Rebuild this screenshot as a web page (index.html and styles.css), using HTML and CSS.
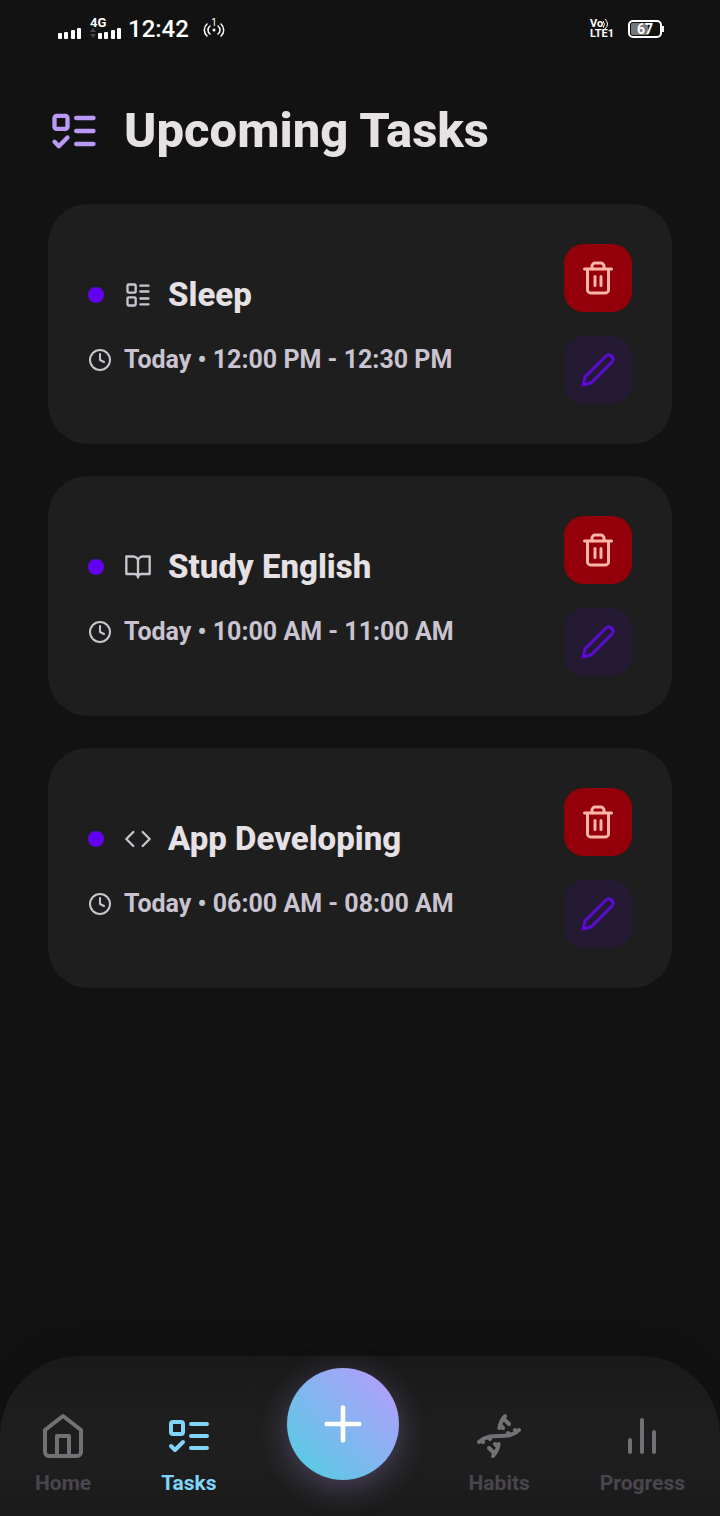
FILE: index.html
```html
<!DOCTYPE html>
<html lang="en">
<head>
    <meta charset="UTF-8">
    <meta name="viewport" content="width=device-width, initial-scale=1.0">
    <title>Upcoming Tasks</title>
    <link rel="stylesheet" href="styles.css">
</head>
<body>
    <!-- Icons shared by the cards -->
    <svg class="sprite" aria-hidden="true">
        <symbol id="icon-todo" viewBox="0 0 24 24">
            <rect x="3" y="5" width="6" height="6" rx="1"/>
            <path d="m3 17 2 2 4-4M13 6h8M13 12h8M13 18h8"/>
        </symbol>
        <symbol id="icon-clock" viewBox="0 0 24 24">
            <circle cx="12" cy="12" r="10"/>
            <path d="M12 6v6l4 2"/>
        </symbol>
        <symbol id="icon-trash" viewBox="0 0 24 24">
            <path d="M3 6h18M19 6v14c0 1-1 2-2 2H7c-1 0-2-1-2-2V6M8 6V4c0-1 1-2 2-2h4c1 0 2 1 2 2v2M10 11v6M14 11v6"/>
        </symbol>
        <symbol id="icon-pencil" viewBox="0 0 24 24">
            <path d="M17 3a2.850 2.830 0 1 1 4 4L7.500 20.500 2 22l1.500-5.500Z"/>
        </symbol>
    </svg>

    <header class="status-bar">
        <div class="status-left">
            <svg class="signal" width="24" height="11" viewBox="0 0 24 11" aria-hidden="true">
                <rect x="0" y="5" width="4" height="6" rx="1"/>
                <rect x="6" y="4" width="4" height="7" rx="1"/>
                <rect x="13" y="2" width="4" height="9" rx="1"/>
                <rect x="19" y="0" width="4" height="11" rx="1"/>
            </svg>
            <div class="network">
                <span class="network-type">4G</span>
                <svg class="signal" width="32" height="11" viewBox="0 0 32 11" aria-hidden="true">
                    <path class="dim" d="M0 4l3-4 3 4zM0 6l3 4 3-4z"/>
                    <rect x="8" y="5" width="4" height="6" rx="1"/>
                    <rect x="14" y="4" width="4" height="7" rx="1"/>
                    <rect x="21" y="2" width="4" height="9" rx="1"/>
                    <rect x="27" y="0" width="4" height="11" rx="1"/>
                </svg>
            </div>
            <span class="time">12:42</span>
            <svg class="hotspot" width="22" height="22" viewBox="0 0 22 22" aria-hidden="true">
                <circle cx="11" cy="12" r="1.500"/>
                <path d="M7 8a5 5 0 0 0 0 8M15 8a5 5 0 0 1 0 8M4 6a8 8 0 0 0 0 12M18 6a8 8 0 0 1 0 12"/>
                <text x="11" y="8">1</text>
            </svg>
        </div>
        <div class="status-right">
            <div class="volte">
                <span class="vo">Vo<svg width="7" height="10" viewBox="0 0 7 10" aria-hidden="true"><path d="M0 2q3 3 0 7M2 0q5 5 0 10"/></svg></span>
                <span>LTE1</span>
            </div>
            <div class="battery"><span>67</span></div>
        </div>
    </header>

    <main class="content">
        <h1 class="page-title">
            <svg class="icon title-icon"><use href="#icon-todo"/></svg>
            Upcoming Tasks
        </h1>

        <article class="task-card">
            <div class="task-info">
                <h2 class="task-name">
                    <span class="dot"></span>
                    <svg class="icon task-icon" viewBox="0 0 24 24">
                        <rect x="3" y="3" width="7" height="7" rx="1"/>
                        <rect x="3" y="14" width="7" height="7" rx="1"/>
                        <path d="M14 4h7M14 9h7M14 15h7M14 20h7"/>
                    </svg>
                    Sleep
                </h2>
                <p class="task-time">
                    <svg class="icon clock-icon"><use href="#icon-clock"/></svg>
                    Today • 12:00 PM - 12:30 PM
                </p>
            </div>
            <div class="task-actions">
                <button class="btn btn-delete" aria-label="Delete Sleep"><svg class="icon"><use href="#icon-trash"/></svg></button>
                <button class="btn btn-edit" aria-label="Edit Sleep"><svg class="icon"><use href="#icon-pencil"/></svg></button>
            </div>
        </article>

        <article class="task-card">
            <div class="task-info">
                <h2 class="task-name">
                    <span class="dot"></span>
                    <svg class="icon task-icon" viewBox="0 0 24 24">
                        <path d="M2 3h6a4 4 0 0 1 4 4v14a3 3 0 0 0-3-3H2zM22 3h-6a4 4 0 0 0-4 4v14a3 3 0 0 1 3-3h7z"/>
                    </svg>
                    Study English
                </h2>
                <p class="task-time">
                    <svg class="icon clock-icon"><use href="#icon-clock"/></svg>
                    Today • 10:00 AM - 11:00 AM
                </p>
            </div>
            <div class="task-actions">
                <button class="btn btn-delete" aria-label="Delete Study English"><svg class="icon"><use href="#icon-trash"/></svg></button>
                <button class="btn btn-edit" aria-label="Edit Study English"><svg class="icon"><use href="#icon-pencil"/></svg></button>
            </div>
        </article>

        <article class="task-card">
            <div class="task-info">
                <h2 class="task-name">
                    <span class="dot"></span>
                    <svg class="icon task-icon" viewBox="0 0 24 24">
                        <path d="m16 18 6-6-6-6M8 6l-6 6 6 6"/>
                    </svg>
                    App Developing
                </h2>
                <p class="task-time">
                    <svg class="icon clock-icon"><use href="#icon-clock"/></svg>
                    Today • 06:00 AM - 08:00 AM
                </p>
            </div>
            <div class="task-actions">
                <button class="btn btn-delete" aria-label="Delete App Developing"><svg class="icon"><use href="#icon-trash"/></svg></button>
                <button class="btn btn-edit" aria-label="Edit App Developing"><svg class="icon"><use href="#icon-pencil"/></svg></button>
            </div>
        </article>
    </main>

    <nav class="tab-bar">
        <a class="tab" href="#home">
            <svg class="icon" viewBox="0 0 24 24">
                <path d="m3 9 9-7 9 7v11a2 2 0 0 1-2 2H5a2 2 0 0 1-2-2zM9 22V12h6v10"/>
            </svg>
            Home
        </a>
        <a class="tab active" href="#tasks">
            <svg class="icon"><use href="#icon-todo"/></svg>
            Tasks
        </a>
        <button class="add-btn" aria-label="Add task">
            <svg class="icon" viewBox="0 0 24 24"><path d="M5 12h14M12 5v14"/></svg>
        </button>
        <a class="tab" href="#habits">
            <svg class="icon" viewBox="0 0 24 24">
                <path d="m10 16 1.500 1.500M14 8l-1.500-1.500M15 2c-1.798 1.998-2.518 3.995-2.807 5.993M16.500 10.500l1 1M17 6l-2.891-2.891M2 15c6.667-6 13.333 0 20-6M20 9l.891.891M3.109 14.109 4 15M6.500 12.500l1 1M7 18l2.891 2.891M9 22c1.798-1.998 2.518-3.995 2.807-5.993"/>
            </svg>
            Habits
        </a>
        <a class="tab" href="#progress">
            <svg class="icon" viewBox="0 0 24 24"><path d="M6 20v-6M12 20V4M18 20V10"/></svg>
            Progress
        </a>
    </nav>
</body>
</html>
```
FILE: styles.css
```css
* {
    box-sizing: border-box;
}
body {
    font-family: Roboto, sans-serif;
    margin: 0;
    min-height: 100vh;
    display: flex;
    flex-direction: column;
    background-color: #121212;
    color: #e6e1e5;
}
h1, h2, p {
    margin: 0;
}
button {
    border: none;
    padding: 0;
    cursor: pointer;
}
.sprite {
    display: none;
}
.icon {
    flex: none;
    fill: none;
    stroke: currentColor;
    stroke-width: 2;
    stroke-linecap: round;
    stroke-linejoin: round;
}

/* Status bar */
.status-bar {
    display: flex;
    justify-content: space-between;
    align-items: center;
    height: 58px;
    padding: 0 58px;
    color: #fff;
}
.status-left, .status-right {
    display: flex;
    align-items: center;
}
.signal {
    display: block;
    fill: #fff;
}
.status-left > .signal {
    margin-top: 8px;
}
.signal .dim {
    fill: #48484a;
}
.network {
    width: 32px;
    margin: 0 6px 2px 8px;
}
.network-type {
    display: block;
    font-size: 13px;
    font-weight: 700;
    line-height: 11px;
}
.time {
    font-size: 24px;
    font-weight: 500;
    line-height: 28px;
}
.hotspot {
    margin-left: 14px;
    overflow: visible;
    fill: none;
    stroke: #fff;
    stroke-width: 1.5;
    stroke-linecap: round;
}
.hotspot circle, .hotspot text {
    fill: #fff;
    stroke: none;
}
.hotspot text {
    font-size: 10px;
    text-anchor: middle;
}
.volte {
    font-size: 11px;
    font-weight: 700;
    line-height: 10px;
}
.volte span {
    display: block;
}
.vo svg {
    fill: none;
    stroke: #fff;
    vertical-align: top;
}
.battery {
    position: relative;
    width: 34px;
    height: 18px;
    margin-left: 14px;
    border: 2px solid #fff;
    border-radius: 5px;
    background: linear-gradient(90deg, #777 60%, transparent 60%) content-box;
    padding: 1px;
    font-size: 14px;
    font-weight: 700;
    line-height: 12px;
    text-align: center;
}
.battery::after {
    content: "";
    position: absolute;
    top: 4px;
    right: -4px;
    width: 2px;
    height: 6px;
    background-color: #fff;
}

/* Tasks */
.content {
    flex: 1;
    display: flex;
    flex-direction: column;
    gap: 32px;
    padding: 44px 48px 32px;
}
.page-title {
    display: flex;
    align-items: center;
    gap: 24px;
    margin-bottom: 12px;
    font-size: 49px;
    font-weight: 800;
    line-height: 58px;
}
.title-icon {
    width: 52px;
    height: 52px;
    color: #bb9af7;
}
.task-card {
    display: flex;
    align-items: center;
    justify-content: space-between;
    padding: 40px;
    border-radius: 40px;
    background-color: #1e1e1e;
}
.task-info {
    display: flex;
    flex-direction: column;
    gap: 30px;
}
.task-name {
    display: flex;
    align-items: center;
    gap: 16px;
    font-size: 33px;
    font-weight: 800;
    line-height: 42px;
}
.dot {
    width: 16px;
    height: 16px;
    margin-right: 4px;
    border-radius: 50%;
    background-color: #6200ee;
}
.task-icon {
    width: 28px;
    height: 28px;
    color: #cac4d0;
}
.task-time {
    display: flex;
    align-items: center;
    gap: 12px;
    font-size: 25px;
    font-weight: 700;
    line-height: 28px;
    color: #cac4d0;
}
.clock-icon {
    width: 24px;
    height: 24px;
}
.task-actions {
    display: flex;
    flex-direction: column;
    gap: 24px;
}
.btn {
    display: flex;
    align-items: center;
    justify-content: center;
    width: 68px;
    height: 68px;
    border-radius: 20px;
}
.btn .icon {
    width: 36px;
    height: 36px;
}
.btn-delete {
    background-color: #93000a;
    color: #ffb4ab;
}
.btn-edit {
    background-color: #251a33;
    color: #5b0bd8;
}

/* Bottom navigation */
.tab-bar {
    display: flex;
    justify-content: space-around;
    align-items: flex-start;
    height: 160px;
    padding-top: 56px;
    border-radius: 80px 80px 0 0;
    background: linear-gradient(#191919, #1e1e1e 40%, #1e1e1e 70%, #1a1a1a);
    box-shadow: 0 -8px 32px rgba(0, 0, 0, 0.12);
}
.tab {
    display: flex;
    flex-direction: column;
    align-items: center;
    gap: 12px;
    font-size: 21px;
    font-weight: 700;
    line-height: 22px;
    color: #49454f;
    text-decoration: none;
}
.tab .icon {
    width: 48px;
    height: 48px;
    color: #737175;
}
.tab.active, .tab.active .icon {
    color: #81d4fa;
}
.add-btn {
    display: flex;
    align-items: center;
    justify-content: center;
    width: 112px;
    height: 112px;
    margin-top: -44px;
    border-radius: 50%;
    background: linear-gradient(45deg, #4dd0e1, #bb9aff);
    box-shadow: 0 8px 32px rgba(187, 154, 247, 0.3);
    color: #fff;
}
.add-btn .icon {
    width: 56px;
    height: 56px;
}
```
